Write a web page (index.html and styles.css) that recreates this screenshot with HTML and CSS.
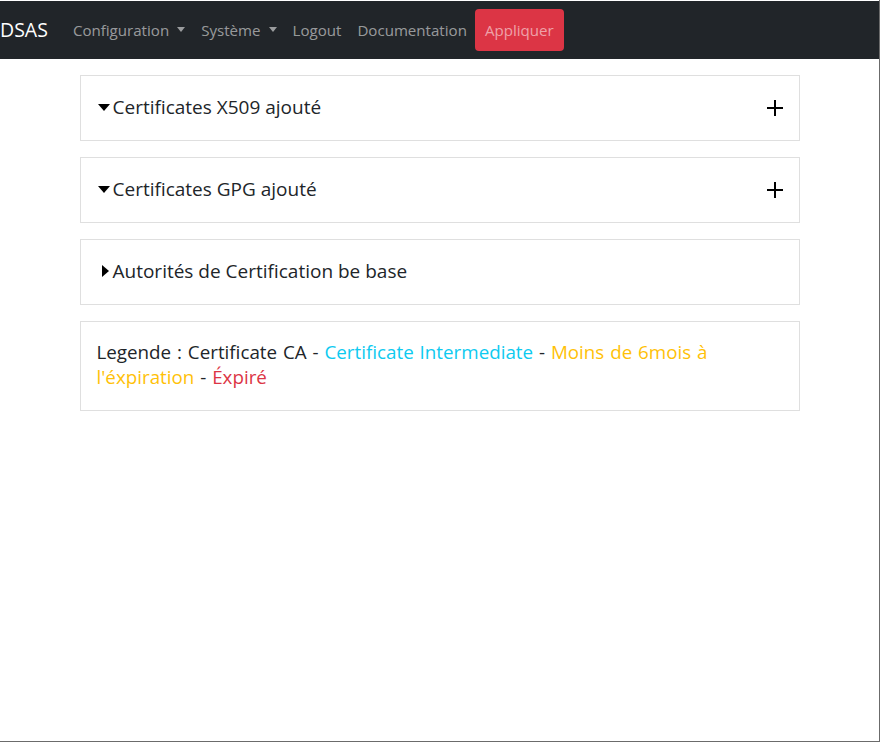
FILE: index.html
```html
<!DOCTYPE html>
<html lang="fr">
<head>
<meta charset="utf-8">
<title>DSAS - Certificates</title>
<link rel="stylesheet" href="styles.css">
</head>
<body>
<div class="frame">
  <nav class="navbar">
    <a class="brand" href="#">DSAS</a>
    <ul class="nav">
      <li><a class="nav-link dropdown" href="#">Configuration</a></li>
      <li><a class="nav-link dropdown" href="#">Système</a></li>
      <li><a class="nav-link" href="#">Logout</a></li>
      <li><a class="nav-link" href="#">Documentation</a></li>
      <li class="apply"><a class="nav-link" href="#">Appliquer</a></li>
    </ul>
  </nav>
  <main class="container">
    <section class="card">
      <div class="card-header">
        <span class="title"><span class="caret down"></span>Certificates X509 ajouté</span>
        <svg class="plus" width="16" height="16" viewBox="0 0 16 16" aria-hidden="true"><path d="M8 0v16M0 8h16" stroke="#000" stroke-width="2" fill="none"/></svg>
      </div>
    </section>
    <section class="card">
      <div class="card-header">
        <span class="title"><span class="caret down"></span>Certificates GPG ajouté</span>
        <svg class="plus" width="16" height="16" viewBox="0 0 16 16" aria-hidden="true"><path d="M8 0v16M0 8h16" stroke="#000" stroke-width="2" fill="none"/></svg>
      </div>
    </section>
    <section class="card">
      <div class="card-header">
        <span class="title"><span class="caret right"></span>Autorités de Certification be base</span>
      </div>
    </section>
    <section class="card legend">
      <p><span>Legende : Certificate CA -</span> <span class="info">Certificate Intermediate</span> <span>-</span> <span class="warn">Moins de 6mois à</span> <span class="warn">l'éxpiration</span> <span>-</span> <span class="danger">Éxpiré</span></p>
    </section>
  </main>
</div>
</body>
</html>
```
FILE: styles.css
```css
* { box-sizing: border-box; }
html, body { margin: 0; padding: 0; background: #fff; }
body {
  font-family: "Open Sans", "Noto Sans", sans-serif;
  color: #212529;
}
.frame {
  width: 880px;
  height: 742px;
  padding-top: 1px;
  border-right: 1px solid #6b6b6b;
  border-bottom: 1px solid #6b6b6b;
  background: #fff;
}
.navbar {
  display: flex;
  align-items: center;
  height: 58px;
  background: #212529;
  padding: 0;
}
.brand {
  color: #fff;
  text-decoration: none;
  font-size: 19.5px;
  margin-left: 0;
  margin-right: 17px;
  line-height: 1;
}
.nav {
  display: flex;
  align-items: center;
  list-style: none;
  margin: 0;
  padding: 0;
}
.nav-link {
  display: block;
  color: rgba(255,255,255,.55);
  text-decoration: none;
  font-size: 15.1px;
  line-height: 26px;
  padding: 8px 8px;
}
.dropdown::after {
  content: "";
  display: inline-block;
  margin-left: 8px;
  vertical-align: 4px;
  border-top: 5px solid;
  border-left: 4px solid transparent;
  border-right: 4px solid transparent;
}
.apply {
  background: #dc3545;
  border-radius: 4px;
  height: 42px;
  display: flex;
  align-items: center;
}
.apply .nav-link { padding: 0 10px; }
.container {
  width: 720px;
  margin: 16px auto 0;
  display: flex;
  flex-direction: column;
  gap: 16px;
}
.card {
  border: 1px solid #dfdfdf;
}
.card-header {
  height: 64px;
  display: flex;
  align-items: center;
  justify-content: space-between;
  padding: 0 16px 0 17px;
}
.title {
  font-size: 19px;
  display: flex;
  align-items: center;
  margin-top: -2px;
}
.caret { display: inline-block; margin-right: 3px; }
.caret.down {
  border-top: 7px solid #000;
  border-left: 6px solid transparent;
  border-right: 6px solid transparent;
}
.caret.right {
  margin-left: 4px;
  margin-right: 4px;
  border-left: 7px solid #000;
  border-top: 6px solid transparent;
  border-bottom: 6px solid transparent;
}
.legend p {
  margin: 0;
  padding: 18px 16px 20px 16px;
  font-size: 18.8px;
  line-height: 25px;
  word-spacing: 1px;
}
.info { color: #0dcaf0; }
.warn { color: #ffc107; }
.danger { color: #dc3545; }
```
